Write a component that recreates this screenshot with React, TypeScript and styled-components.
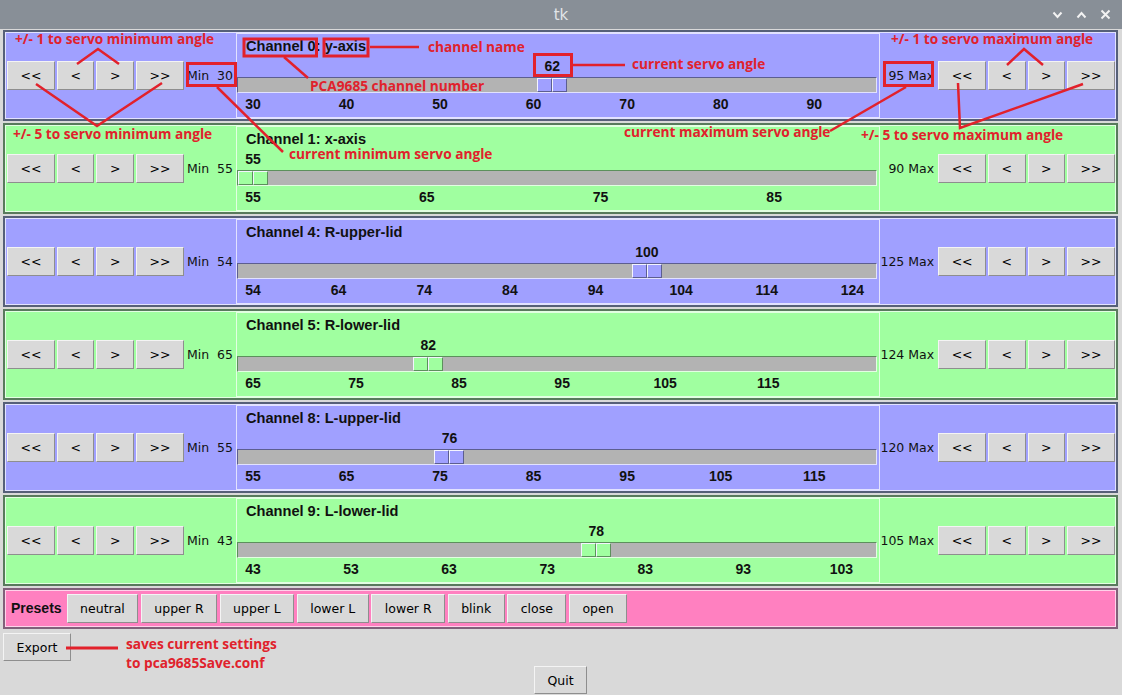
import React from 'react';
import styled, { createGlobalStyle } from 'styled-components';

const GlobalStyle = createGlobalStyle`
  html, body { margin: 0; padding: 0; background: #d9d9d9; }
  body { width: 1122px; height: 695px; overflow: hidden; font-family: "DejaVu Sans", sans-serif; }
  * { box-sizing: border-box; }
`;

type Theme = { bg: string; light: string; dark: string; frame: string };
const BLUE: Theme = { bg: '#a0a0ff', light: '#e2e2ff', dark: '#5c5e90', frame: '#566078' };
const GREEN: Theme = { bg: '#a0ffa0', light: '#e2ffe2', dark: '#5c905c', frame: '#587a5c' };

const Window = styled.div`
  position: relative;
  width: 1122px;
  height: 695px;
  background: #d9d9d9;
  display: flex;
  flex-direction: column;
`;

const TitleBar = styled.div`
  height: 29px;
  background: #888f97;
  display: grid;
  grid-template-columns: 1fr auto 1fr;
  align-items: center;
`;

const TitleText = styled.div`
  grid-column: 2;
  color: #e2e5e8;
  font-family: "DejaVu Sans", sans-serif;
  font-size: 15px;
`;

const WinControls = styled.div`
  grid-column: 3;
  justify-self: end;
  display: flex;
  gap: 13px;
  padding-right: 11px;
  align-items: center;
`;

const Content = styled.div`
  display: flex;
  flex-direction: column;
  padding: 1px 4px 0 3px;
  gap: 2px;
`;

const Row = styled.div<{ $t: Theme }>`
  height: 91px;
  background: ${(p) => p.$t.bg};
  border: 2px solid ${(p) => p.$t.frame};
  box-shadow: inset 0 0 0 1px ${(p) => p.$t.light};
  padding: 1px;
  display: grid;
  grid-template-columns: 230px 1fr 235px;
`;

const Side = styled.div<{ $right?: boolean }>`
  display: flex;
  align-items: center;
  padding-left: ${(p) => (p.$right ? 0 : 1)}px;
`;

const ButtonGroup = styled.div<{ $gap?: number }>`
  display: flex;
  gap: ${(p) => p.$gap ?? 2}px;
`;

const TkButton = styled.button<{ $h?: number }>`
  height: ${(p) => p.$h ?? 29}px;
  padding: 0 12.5px;
  margin: 0;
  border: 1px solid;
  border-color: #f4f4f4 #8e8e8e #8e8e8e #f4f4f4;
  border-radius: 0;
  background: #d9d9d9;
  color: #000;
  font-family: "DejaVu Sans", sans-serif;
  font-size: 12.5px;
  white-space: pre;
  cursor: default;
`;

const LimitLabel = styled.div<{ $right?: boolean }>`
  font-family: "DejaVu Sans", sans-serif;
  font-size: 12.5px;
  color: #111;
  white-space: pre;
  width: ${(p) => (p.$right ? '55px' : 'auto')};
  text-align: ${(p) => (p.$right ? 'right' : 'left')};
  margin: ${(p) => (p.$right ? '0 4px 0 0' : '0 0 0 3px')};
`;

const Middle = styled.div<{ $t: Theme }>`
  border: 1px solid ${(p) => p.$t.light};
  padding: 5px 2px 0 0;
  display: flex;
  flex-direction: column;
`;

const BoldText = styled.div`
  font-family: "Liberation Sans", Arial, sans-serif;
  font-weight: bold;
  font-size: 14px;
  line-height: 17px;
  color: #111;
  white-space: pre;
`;

const ChannelTitle = styled(BoldText)`
  padding-left: 9px;
  font-size: 14.6px;
  line-height: 15px;
  height: 15px;
`;

const ScaleLine = styled.div<{ $h: number; $mt?: number }>`
  position: relative;
  height: ${(p) => p.$h}px;
  margin-top: ${(p) => p.$mt ?? 0}px;
`;

const PlacedLabel = styled(BoldText)<{ $bottom?: number }>`
  position: absolute;
  bottom: ${(p) => p.$bottom ?? 0}px;
  transform: translateX(-50%);
`;

const Trough = styled.div<{ $t: Theme }>`
  position: relative;
  height: 16px;
  background: #b3b3b3;
  border: 1px solid;
  border-color: ${(p) => `${p.$t.dark} ${p.$t.light} ${p.$t.light} ${p.$t.dark}`};
`;

const Thumb = styled.div`
  position: absolute;
  top: 0;
  bottom: 0;
  width: 30px;
  display: flex;
`;

const ThumbHalf = styled.div<{ $t: Theme }>`
  flex: 1;
  background: ${(p) => p.$t.bg};
  border: 1px solid;
  border-color: ${(p) => `#f4f4ff ${p.$t.dark} ${p.$t.dark} #f4f4ff`};
`;

const PresetRow = styled.div`
  height: 41px;
  background: #ff80c0;
  border: 2px solid #80607a;
  box-shadow: inset 0 0 0 1px #ffd2ea;
  display: flex;
  align-items: center;
  padding-left: 6px;
`;

const PresetTitle = styled(BoldText)`
  margin-right: 5px;
`;

const ExportWrap = styled.div`
  margin-top: 2px;
  display: flex;
`;

const QuitWrap = styled.div`
  margin-top: 3px;
  display: flex;
  justify-content: center;
`;

const Overlay = styled.svg`
  position: absolute;
  left: 0;
  top: 0;
  pointer-events: none;
`;

const Note = styled.div<{ $x: number; $y: number }>`
  position: absolute;
  left: ${(p) => p.$x}px;
  top: ${(p) => p.$y - 5}px;
  line-height: 10px;
  font-family: "Open Sans", sans-serif;
  font-weight: bold;
  font-size: 13.7px;
  color: #e0222c;
  white-space: pre;
  pointer-events: none;
`;

type Channel = { ch: number; name: string; min: number; max: number; val: number; t: Theme };

const channels: Channel[] = [
  { ch: 0, name: 'y-axis', min: 30, max: 95, val: 62, t: BLUE },
  { ch: 1, name: 'x-axis', min: 55, max: 90, val: 55, t: GREEN },
  { ch: 4, name: 'R-upper-lid', min: 54, max: 125, val: 100, t: BLUE },
  { ch: 5, name: 'R-lower-lid', min: 65, max: 124, val: 82, t: GREEN },
  { ch: 8, name: 'L-upper-lid', min: 55, max: 120, val: 76, t: BLUE },
  { ch: 9, name: 'L-lower-lid', min: 43, max: 105, val: 78, t: GREEN },
];

const stepButtons = ['<<', '<', '>', '>>'];

const centerAt = (f: number) => `calc(16px + ${f} * (100% - 32px))`;

function Scale({ c }: { c: Channel }) {
  const span = c.max - c.min;
  const frac = (v: number) => (v - c.min) / span;
  const ticks: number[] = [];
  for (let v = c.min; v <= c.max; v += 10) ticks.push(v);
  return (
    <>
      <ScaleLine $h={23}>
        <PlacedLabel $bottom={2} style={{ left: centerAt(frac(c.val)) }}>
          {c.val}
        </PlacedLabel>
      </ScaleLine>
      <Trough $t={c.t}>
        <Thumb style={{ left: `calc(${frac(c.val)} * (100% - 30px))` }}>
          <ThumbHalf $t={c.t} />
          <ThumbHalf $t={c.t} />
        </Thumb>
      </Trough>
      <ScaleLine $h={17} $mt={3}>
        {ticks.map((v) => (
          <PlacedLabel key={v} style={{ left: centerAt(frac(v)) }}>
            {v}
          </PlacedLabel>
        ))}
      </ScaleLine>
    </>
  );
}

function ChannelRow({ c }: { c: Channel }) {
  return (
    <Row $t={c.t}>
      <Side>
        <ButtonGroup>
          {stepButtons.map((b) => (
            <TkButton key={b}>{b}</TkButton>
          ))}
        </ButtonGroup>
        <LimitLabel>{`Min  ${c.min}`}</LimitLabel>
      </Side>
      <Middle $t={c.t}>
        <ChannelTitle>{`Channel ${c.ch}: ${c.name}`}</ChannelTitle>
        <Scale c={c} />
      </Middle>
      <Side $right>
        <LimitLabel $right>{`${c.max} Max`}</LimitLabel>
        <ButtonGroup>
          {stepButtons.map((b) => (
            <TkButton key={b}>{b}</TkButton>
          ))}
        </ButtonGroup>
      </Side>
    </Row>
  );
}

const presets = ['neutral', 'upper R', 'upper L', 'lower L', 'lower R', 'blink', 'close', 'open'];

const RED = '#e2212b';

function Annotations() {
  return (
    <>
      <Overlay width={1122} height={695} viewBox="0 0 1122 695">
        <g fill="none" stroke={RED} strokeWidth={3}>
          <rect x={244} y={39} width={72.5} height={17} />
          <rect x={324} y={39} width={44} height={17} />
          <rect x={187.5} y={63.5} width={48} height={22} />
          <rect x={534.5} y={54.5} width={37} height={21} />
          <rect x={884.5} y={62.5} width={48} height={23} />
        </g>
        <g fill="none" stroke={RED} strokeWidth={2.5} strokeLinecap="butt">
          <polyline points="77,64 98,49 119,64" />
          <polyline points="36,84 97,126 162,83" />
          <line x1={217} y1={87} x2={283} y2={152} />
          <line x1={370} y1={47} x2={419} y2={47} />
          <line x1={284} y1={57} x2={308} y2={78} />
          <line x1={573} y1={65} x2={625} y2={65} />
          <polyline points="1007,65 1024,49 1043,65" />
          <line x1={906} y1={87} x2={830} y2={131} />
          <polyline points="958,83 960,128 1083,84" />
          <line x1={66} y1={648} x2={118} y2={648} strokeWidth={3} />
        </g>
      </Overlay>
      <Note $x={15} $y={39}>+/- 1 to servo minimum angle</Note>
      <Note $x={428} $y={47}>channel name</Note>
      <Note $x={632} $y={64}>current servo angle</Note>
      <Note $x={891} $y={39}>+/- 1 to servo maximum angle</Note>
      <Note $x={310} $y={86}>PCA9685 channel number</Note>
      <Note $x={13} $y={134}>+/- 5 to servo minimum angle</Note>
      <Note $x={624} $y={132}>current maximum servo angle</Note>
      <Note $x={861} $y={135}>+/- 5 to servo maximum angle</Note>
      <Note $x={289} $y={154}>current minimum servo angle</Note>
      <Note $x={126} $y={644}>saves current settings</Note>
      <Note $x={126} $y={663}>to pca9685Save.conf</Note>
    </>
  );
}

function Chevron({ up }: { up?: boolean }) {
  return (
    <svg width="11" height="8" viewBox="0 0 11 8">
      <polyline
        points={up ? '1.5,6.5 5.5,2 9.5,6.5' : '1.5,1.5 5.5,6 9.5,1.5'}
        fill="none"
        stroke="#f2f2f2"
        strokeWidth="2"
      />
    </svg>
  );
}

export default function App() {
  return (
    <>
      <GlobalStyle />
      <Window>
        <TitleBar>
          <TitleText>tk</TitleText>
          <WinControls>
            <Chevron />
            <Chevron up />
            <svg width="11" height="11" viewBox="0 0 11 11">
              <path d="M1.5 1.5 L9.5 9.5 M9.5 1.5 L1.5 9.5" stroke="#f2f2f2" strokeWidth="2" />
            </svg>
          </WinControls>
        </TitleBar>
        <Content>
          {channels.map((c) => (
            <ChannelRow key={c.ch} c={c} />
          ))}
          <PresetRow>
            <PresetTitle>Presets</PresetTitle>
            <ButtonGroup $gap={2.5}>
              {presets.map((p) => (
                <TkButton key={p}>{p}</TkButton>
              ))}
            </ButtonGroup>
          </PresetRow>
          <ExportWrap>
            <TkButton $h={28}>Export</TkButton>
          </ExportWrap>
          <QuitWrap>
            <TkButton $h={28}>Quit</TkButton>
          </QuitWrap>
        </Content>
        <Annotations />
      </Window>
    </>
  );
}
